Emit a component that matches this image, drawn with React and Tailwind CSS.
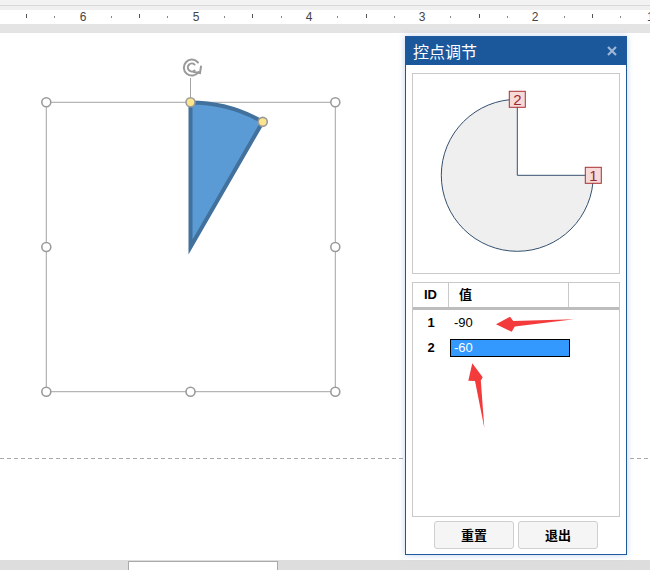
import React from 'react';

const UNIT = 113.2;
const QUARTER = UNIT / 4;
const ORIGIN = 82.5; // x of the "6" mark

function Ruler() {
  const ticks = [];
  for (let k = -2; k <= 22; k++) {
    if (k % 4 === 0) continue;
    const x = ORIGIN + k * QUARTER;
    const major = Math.abs(k % 4) === 2;
    ticks.push({ x, major });
  }
  const numbers = [6, 5, 4, 3, 2].map((n, i) => ({ n, x: ORIGIN + i * UNIT }));

  return (
    <div className="relative h-[14px] bg-white">
      {ticks.map((t, i) => (
        <span
          key={i}
          className={t.major ? 'absolute top-[4px] h-[4px] w-px bg-[#555]' : 'absolute top-[6px] h-[2px] w-px bg-[#888]'}
          style={{ left: Math.round(t.x) }}
        />
      ))}
      {numbers.map(({ n, x }) => (
        <span
          key={n}
          className="absolute top-[1px] w-[12px] -ml-[6px] text-center text-[12px] leading-[13px] text-[#444] font-['Liberation_Sans',sans-serif]"
          style={{ left: Math.round(x) }}
        >
          {n}
        </span>
      ))}
      <span className="absolute right-0 top-[1px] w-[3px] overflow-hidden text-[12px] leading-[13px] text-[#444] font-['Liberation_Sans',sans-serif]">
        1
      </span>
    </div>
  );
}

function Handle({ x, y, yellow }) {
  return (
    <circle
      cx={x}
      cy={y}
      r="4.5"
      fill={yellow ? '#fde58c' : '#ffffff'}
      stroke="#9b9b9b"
      strokeWidth="1.6"
    />
  );
}

function CanvasShape() {
  const cx = 190.5, cy = 247, r = 144.5;
  const left = 46.3, right = 335.3, top = 102.3, bottom = 391.7;
  const px = cx + r * Math.cos(Math.PI / 3);
  const py = cy - r * Math.sin(Math.PI / 3);
  return (
    <svg className="absolute left-0 top-0" width="650" height="570">
      {/* page margin guide */}
      <line x1="0" y1="458.5" x2="650" y2="458.5" stroke="#a9a9a9" strokeDasharray="4 3" />
      {/* selection frame */}
      <rect x={left} y={top} width={right - left} height={bottom - top} fill="none" stroke="#a3a3a3" />
      <line x1={cx} y1="78" x2={cx} y2={top} stroke="#a3a3a3" />
      {/* rotation handle */}
      <g fill="none" stroke="#9a9a9a" strokeWidth="2" strokeLinecap="round">
        <path d="M198 62.5 A8 8 0 1 0 198.5 72" />
        <path d="M194.5 64.5 A4 4 0 1 0 194.5 70.5" />
        <path d="M193.5 72 L200 73 L201 66.5" />
      </g>
      {/* pie wedge */}
      <path
        d={`M${cx} ${cy} L${cx} ${cy - r} A${r} ${r} 0 0 1 ${px} ${py} Z`}
        fill="#5b9bd5"
        stroke="#41719c"
        strokeWidth="4"
        strokeLinejoin="miter"
      />
      <Handle x={left} y={top} />
      <Handle x={right} y={top} />
      <Handle x={left} y={247} />
      <Handle x={right} y={247} />
      <Handle x={left} y={bottom} />
      <Handle x={cx} y={bottom} />
      <Handle x={right} y={bottom} />
      <Handle x={cx} y={top} yellow />
      <Handle x={px} y={py} yellow />
    </svg>
  );
}

function Marker({ x, y, label }) {
  return (
    <g>
      <rect x={x - 8} y={y - 8} width="16" height="16" fill="#f6d9d9" stroke="#a8302f" />
      <text
        x={x}
        y={y + 5.5}
        textAnchor="middle"
        fontSize="15"
        fill="#9a2a2a"
        fontFamily="Liberation Sans, sans-serif"
      >
        {label}
      </text>
    </g>
  );
}

function Preview() {
  const cx = 104.3, cy = 101.3, r = 76;
  return (
    <div className="h-[201px] border border-[#c9c9c9] bg-white">
      <svg width="206" height="199">
        <path
          d={`M${cx} ${cy} L${cx + r} ${cy} A${r} ${r} 0 1 1 ${cx} ${cy - r} Z`}
          fill="#efefef"
          stroke="#34506e"
          strokeWidth="1"
        />
        <Marker x={cx} y={cy - r} label="2" />
        <Marker x={cx + r} y={cy} label="1" />
      </svg>
    </div>
  );
}

function Table() {
  const rows = [
    { id: 1, value: '-90' },
    { id: 2, value: '-60', selected: true },
  ];
  return (
    <div className="mt-[8px] h-[235px] border border-[#c9c9c9] bg-white font-['Liberation_Sans','Noto_Sans_CJK_SC',sans-serif] text-[13px] text-black">
      <div className="flex h-[27px] border-b-[3px] border-[#bdbdbd]">
        <div className="flex w-[36px] items-center justify-center border-r border-[#c9c9c9] font-bold">ID</div>
        <div className="flex w-[120px] items-center border-r border-[#c9c9c9] pl-[10px] font-bold">值</div>
        <div className="flex-1" />
      </div>
      {rows.map((row) => (
        <div key={row.id} className="flex h-[25px] items-center">
          <div className="w-[36px] text-center font-bold">{row.id}</div>
          {row.selected ? (
            <div className="ml-px flex h-[18px] w-[120px] items-center border border-black bg-[#3399ff] pl-[3px] text-white">
              {row.value}
            </div>
          ) : (
            <div className="ml-px pl-[4px]">{row.value}</div>
          )}
        </div>
      ))}
    </div>
  );
}

function Dialog() {
  return (
    <div className="absolute left-[405px] top-[36px] flex h-[519px] w-[222px] flex-col border border-[#1f5aa0] bg-white shadow-[0_0_6px_rgba(70,130,200,0.35)]">
      <div className="flex h-[28px] shrink-0 items-center justify-between bg-[#1b579b] pl-[7px] pr-[8px]">
        <span className="text-[16px] text-white font-['Noto_Sans_CJK_SC',sans-serif]">控点调节</span>
        <svg width="12" height="12" viewBox="0 0 12 12">
          <path d="M2 2 L10 10 M10 2 L2 10" stroke="#9db8d8" strokeWidth="2.2" />
        </svg>
      </div>
      <div className="flex flex-1 flex-col px-[6px] pt-[8px]">
        <Preview />
        <Table />
        <div className="mt-[4px] flex justify-center gap-[4px] font-['Noto_Sans_CJK_SC',sans-serif] text-[13px] font-bold text-black">
          <button className="h-[28px] w-[80px] rounded-[3px] border border-[#cfcfcf] bg-[#f5f5f5]">重置</button>
          <button className="h-[28px] w-[80px] rounded-[3px] border border-[#cfcfcf] bg-[#f5f5f5]">退出</button>
        </div>
      </div>
    </div>
  );
}

function Arrows() {
  return (
    <svg className="pointer-events-none absolute left-0 top-0" width="650" height="570">
      <polygon
        points="574,319.3 513.3,320.9 510,316.7 496,324.3 511.7,331.7 514.8,326.6"
        fill="#f33b3b"
      />
      <polygon
        points="484.3,427.7 480.8,380.5 482.7,377.3 472.3,363.3 468.3,380.7 475,381"
        fill="#f33b3b"
      />
    </svg>
  );
}

export default function App() {
  return (
    <div className="relative flex h-[570px] w-[650px] flex-col overflow-hidden bg-white">
      <div className="h-[5px] bg-[#f2f2f2]" />
      <div className="h-px bg-[#d8d8d8]" />
      <div className="h-[4px] bg-[#f0f0f0]" />
      <Ruler />
      <div className="h-[9px] bg-[#e4e4e4]" />
      <div className="relative flex-1 bg-white" />
      <div className="flex h-[10px] bg-[#dddddd] pt-px">
        <div className="ml-[128px] w-[150px] border-x border-t border-[#a9a9a9] bg-white" />
      </div>
      <CanvasShape />
      <Dialog />
      <Arrows />
    </div>
  );
}
